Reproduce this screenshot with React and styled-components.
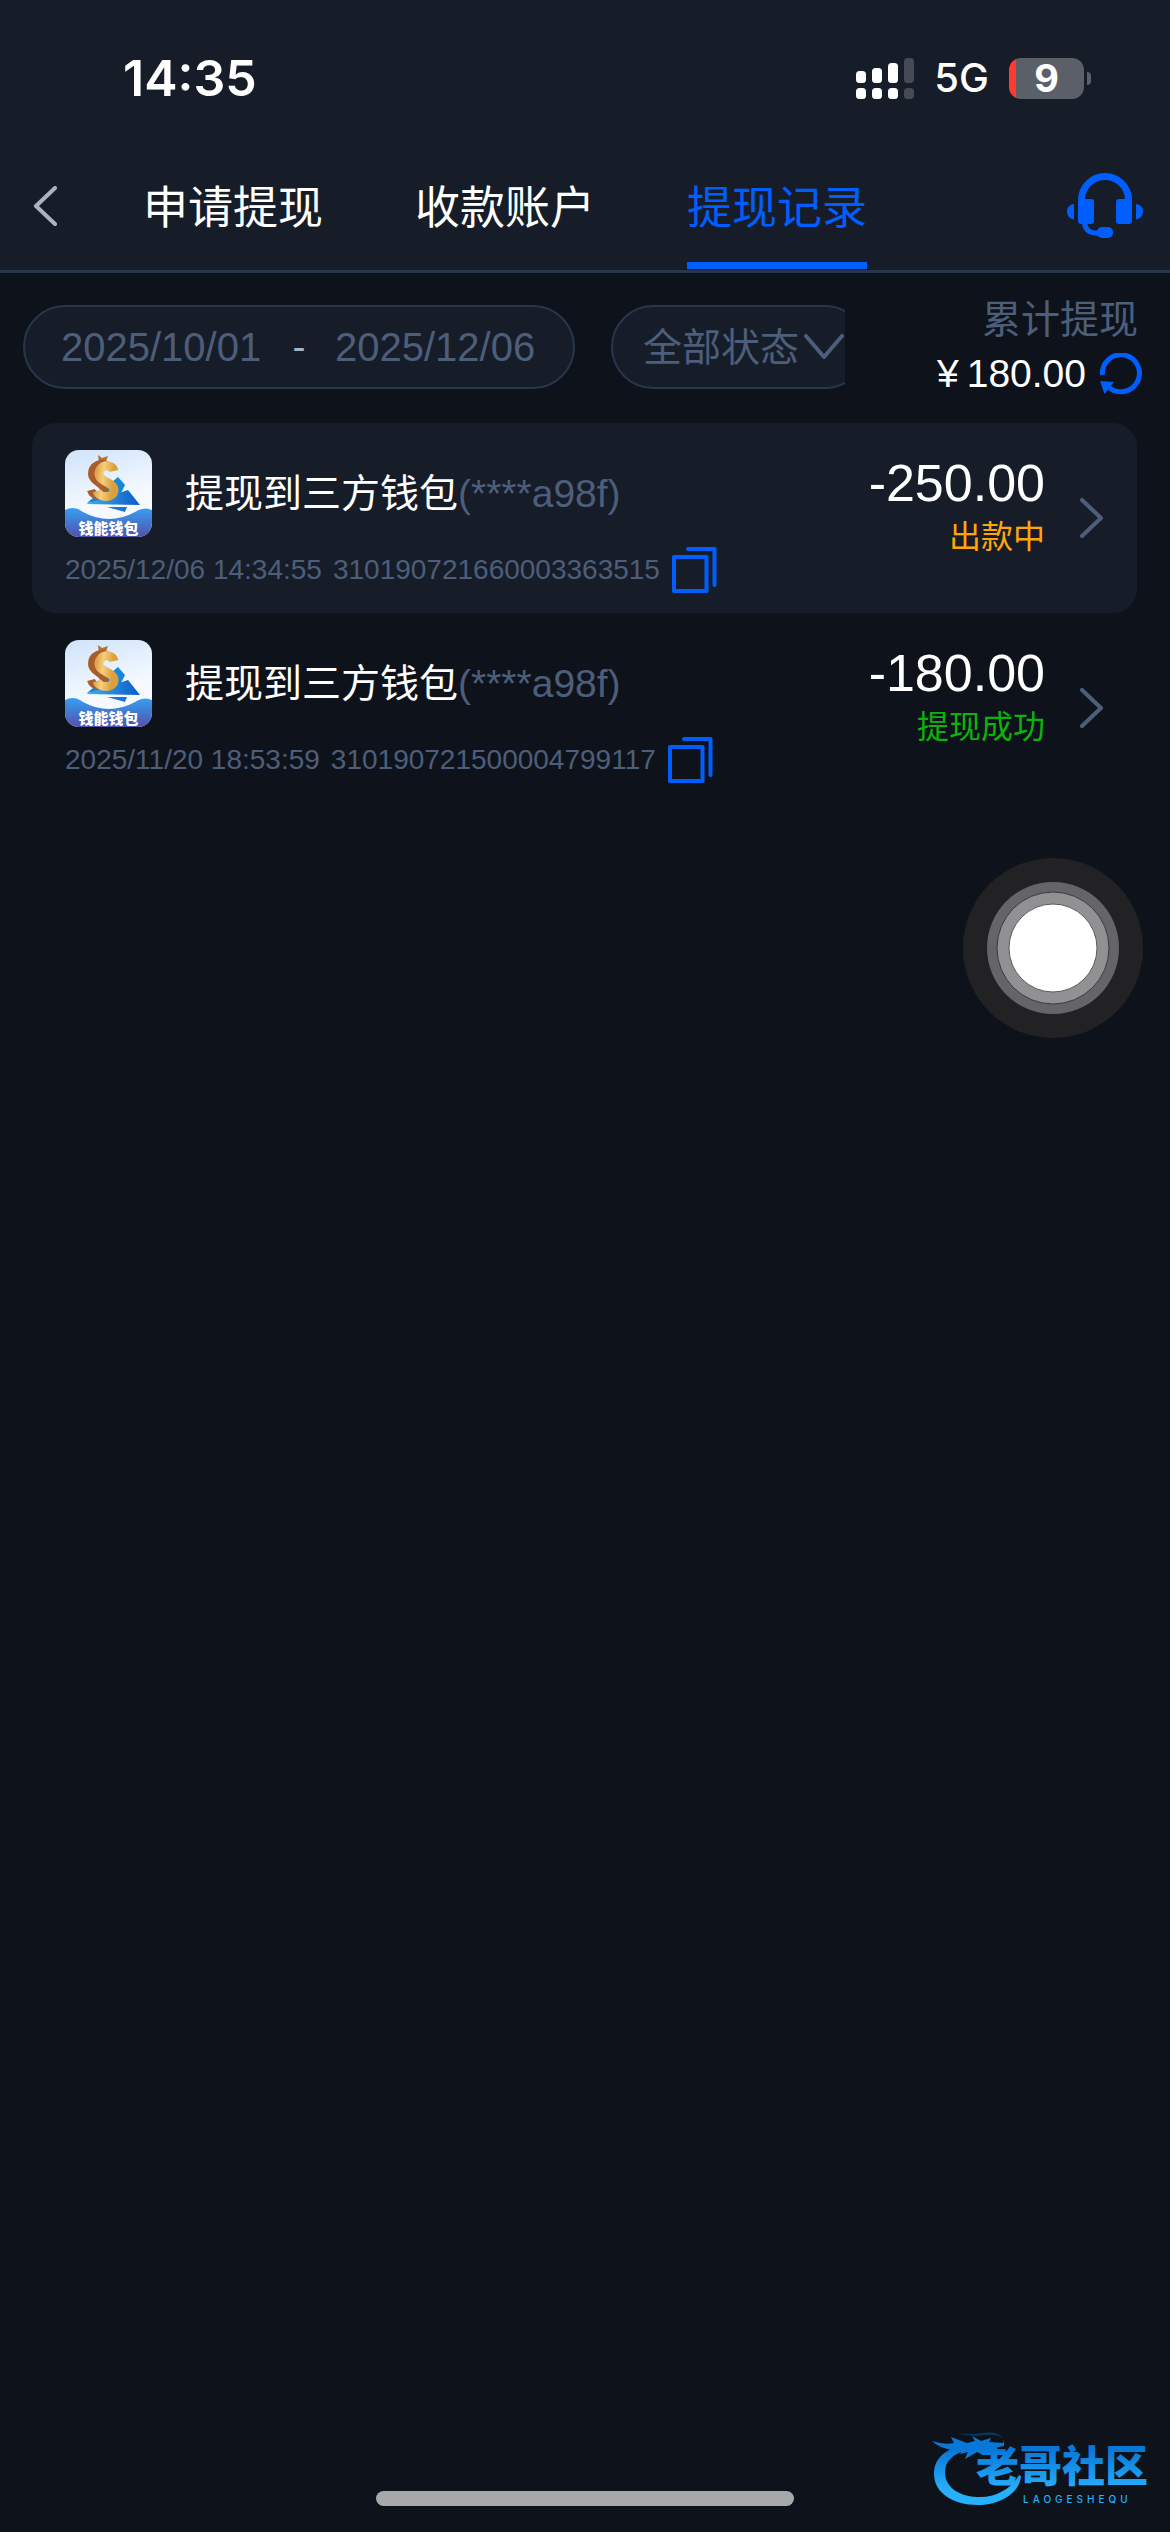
import React from "react";
import styled, { createGlobalStyle } from "styled-components";

const color = {
  page: "#0e131b",
  panel: "#161d28",
  line: "#28364b",
  muted: "#4d5e7b",
  soft: "#a9b3c2",
  accent: "#005eff",
  pending: "#ffa50a",
  success: "#0bb30b",
};

const sans = `"Liberation Sans", "Noto Sans CJK SC", sans-serif`;
const system = `Inter, "Liberation Sans", sans-serif`;

const GlobalStyle = createGlobalStyle`
  *, *::before, *::after { box-sizing: border-box; }
  html { background: ${color.page}; }
  body { margin: 0; background: ${color.page}; color: #fff; font-family: ${sans}; }
  svg { display: block; flex: none; }
  button, input, select { font: inherit; color: inherit; border: 0; background: none; padding: 0; margin: 0; }
`;

const Page = styled.div`
  min-height: 100vh;
  display: flex;
  flex-direction: column;
`;

const Top = styled.header`
  background: ${color.panel};
  border-bottom: 3px solid ${color.line};
`;

const StatusBar = styled.div`
  height: 150px;
  padding: 6px 79px 0 123px;
  display: flex;
  align-items: center;
  font-family: ${system};
`;

const Clock = styled.time`
  flex: 1;
  font-size: 50px;
  line-height: 60px;
  font-weight: 600;
`;

const Network = styled.span`
  margin: 0 20px;
  font-size: 40px;
  line-height: 48px;
  font-weight: 500;
`;

const Battery = styled.span`
  width: 75px;
  height: 41px;
  border-radius: 12px;
  display: grid;
  place-items: center;
  background: linear-gradient(90deg, #ff3b30 7px, #5b6068 7px);
  font-size: 38px;
  line-height: 41px;
  font-weight: 700;
`;

const BatteryTip = styled.span`
  width: 4px;
  height: 13px;
  margin-left: 3px;
  border-radius: 0 4px 4px 0;
  background: #5b6068;
`;

const NavBar = styled.div`
  height: 120px;
  padding: 0 27px 0 33px;
  display: flex;
  align-items: center;
`;

const IconButton = styled.button`
  display: inline-flex;
  cursor: pointer;
`;

const NavButton = styled(IconButton)`
  padding-bottom: 8px;
`;

const Tabs = styled.nav`
  flex: 1;
  align-self: stretch;
  display: flex;
  gap: 92px;
  padding-left: 86px;
`;

const Tab = styled.a`
  display: flex;
  align-items: center;
  margin-bottom: 1px;
  padding-top: 5px;
  border-bottom: 7px solid ${(p) => (p.$active ? color.accent : "transparent")};
  color: ${(p) => (p.$active ? color.accent : "#fff")};
  font-size: 45px;
  line-height: 60px;
  text-decoration: none;
  white-space: nowrap;
`;

const Filters = styled.form`
  display: flex;
  align-items: center;
  padding: 20px 28px 22px 23px;
`;

const DateRange = styled.div`
  width: 552px;
  height: 84px;
  padding: 0 36px;
  display: flex;
  align-items: center;
  justify-content: space-between;
  border: 2px solid ${color.line};
  border-radius: 42px;
  background: ${color.panel};
  color: ${color.soft};
  font-size: 39px;
`;

const DateInput = styled.input`
  width: 202px;
  height: 60px;
  color: ${color.muted};
  font-size: 40px;
`;

const SelectClip = styled.div`
  width: 234px;
  margin-left: 36px;
  overflow: hidden;
`;

const SelectPill = styled.div`
  width: 256px;
  height: 84px;
  padding-left: 30px;
  display: flex;
  align-items: center;
  border: 2px solid ${color.line};
  border-radius: 42px;
  background: ${color.panel};
  color: ${color.muted};
`;

const Select = styled.select`
  appearance: none;
  width: 161px;
  height: 60px;
  font-size: 39px;
`;

const Total = styled.div`
  flex: 1;
  display: flex;
  flex-direction: column;
  align-items: flex-end;
  font-size: 39px;
  line-height: 54px;
  color: ${color.muted};
`;

const TotalLabel = styled.span`
  padding-right: 4px;
`;

const TotalValue = styled.span`
  display: flex;
  align-items: center;
  gap: 14px;
  color: #fff;
`;

const Money = styled.span`
  display: flex;
  gap: 8px;
`;

const Records = styled.ul`
  list-style: none;
  margin: 0;
  padding: 0 33px 0 32px;
`;

const Record = styled.li`
  height: 190px;
  padding: 27px 33px 0;
  display: flex;
  border-radius: 24px;
  background: ${(p) => (p.$raised ? color.panel : "transparent")};
`;

const Info = styled.div`
  flex: 1;
`;

const TitleRow = styled.div`
  display: flex;
  align-items: center;
  gap: 33px;
  height: 87px;
`;

const Title = styled.h2`
  margin: 0;
  font-size: 39px;
  line-height: 54px;
  font-weight: 400;
`;

const Account = styled.span`
  color: ${color.muted};
`;

const Meta = styled.div`
  display: flex;
  align-items: center;
  gap: 11px;
  margin-top: 8px;
  height: 50px;
  color: ${color.muted};
  font-size: 28px;
  line-height: 34px;
`;

const Result = styled.div`
  display: flex;
  flex-direction: column;
  align-items: flex-end;
  padding-top: 3px;
`;

const Amount = styled.strong`
  font-size: 52px;
  line-height: 60px;
  font-weight: 400;
`;

const State = styled.span`
  color: ${(p) => (p.$done ? color.success : color.pending)};
  font-size: 32px;
  line-height: 48px;
`;

const Open = styled(IconButton)`
  height: 136px;
  padding-left: 35px;
  align-items: center;
`;

const AssistiveTouch = styled.button`
  position: fixed;
  right: 27px;
  top: 858px;
  width: 180px;
  height: 180px;
`;

const Footer = styled.footer`
  margin-top: auto;
  padding: 0 12px 26px;
  display: grid;
  grid-template-columns: 1fr 418px 1fr;
  align-items: end;
`;

const HomeIndicator = styled.div`
  grid-column: 2;
  height: 15px;
  border-radius: 8px;
  background: #a7a8ab;
`;

const Brand = styled.div`
  grid-column: 3;
  justify-self: end;
`;

function Signal() {
  const tops = [70, 67, 62, 57];
  return (
    <svg width="58" height="41" viewBox="0 57 58 41" aria-label="信号">
      {tops.map((top, i) => (
        <g key={top} fill={i === 3 ? "#454b55" : "#fff"}>
          <rect x={i * 16} y={top} width="10" height={82 - top} rx="3.5" />
          <rect x={i * 16} y="87" width="10" height="11" rx="3.5" />
        </g>
      ))}
    </svg>
  );
}

function Chevron({ left, stroke }) {
  return (
    <svg width="24" height="40" viewBox="0 0 24 40" fill="none" stroke={stroke} strokeWidth="4" strokeLinecap="round" strokeLinejoin="round">
      <path d={left ? "M22 2 3 20l19 18" : "M2 2l19 18L2 38"} />
    </svg>
  );
}

function Headset() {
  return (
    <svg width="76" height="66" viewBox="0 0 76 66" fill={color.accent}>
      <path d="M14.500 32V27a23.500 23.500 0 0 1 47 0v5" fill="none" stroke={color.accent} strokeWidth="7" />
      <path d="M17.500 48v2q1 9.500 11 10h5" fill="none" stroke={color.accent} strokeWidth="5" />
      <rect x="11" y="26" width="16" height="25" rx="3" />
      <rect x="49" y="26" width="16" height="25" rx="3" />
      <rect x="30" y="54" width="16" height="11" rx="5" />
      <path d="M7 31v15.500Q0 45 0 38.500T7 31zM69 31v15.500q7-1.500 7-8T69 31z" />
    </svg>
  );
}

function Refresh() {
  return (
    <svg width="42" height="42" viewBox="0 0 42 42">
      <path d="M2.500 22A18.500 18.500 0 1 1 8 33.500" fill="none" stroke={color.accent} strokeWidth="5" />
      <path d="M0 28l14 1L4.500 41z" fill={color.accent} />
    </svg>
  );
}

function Copy() {
  return (
    <svg width="46" height="48" viewBox="0 0 46 48" fill="none" stroke={color.accent} strokeWidth="4" strokeLinecap="round" strokeLinejoin="round">
      <path d="M3 11h32.500v34H3zM17 3h26.500v36" />
    </svg>
  );
}

function WalletLogo({ id }) {
  return (
    <svg width="87" height="87" viewBox="0 0 87 87">
      <defs>
        <clipPath id={`${id}-clip`}><rect width="87" height="87" rx="14" /></clipPath>
        <linearGradient id={`${id}-sky`} x1="0" y1="0" x2="0.3" y2="1">
          <stop offset="0" stopColor="#cfe3fb" /><stop offset="0.7" stopColor="#f6faff" />
        </linearGradient>
        <linearGradient id={`${id}-sea`} x1="0" y1="0" x2="0" y2="1">
          <stop offset="0" stopColor="#36a0f2" /><stop offset="1" stopColor="#5350ae" />
        </linearGradient>
        <linearGradient id={`${id}-gold`} x1="0" y1="0" x2="1" y2="0.2">
          <stop offset="0" stopColor="#e0a24c" /><stop offset="0.4" stopColor="#f6cf7c" /><stop offset="1" stopColor="#dba03c" />
        </linearGradient>
        <linearGradient id={`${id}-sail`} x1="0" y1="0" x2="1" y2="0">
          <stop offset="0" stopColor="#3fb0ee" /><stop offset="1" stopColor="#0b5bc8" />
        </linearGradient>
      </defs>
      <g clipPath={`url(#${id}-clip)`}>
        <rect width="87" height="87" fill={`url(#${id}-sky)`} />
        <path d="M53 27l7 8-6 12-12 3-20 3z" fill="#1685dc" />
        <path d="M21 54l42-14 12 15z" fill={`url(#${id}-sail)`} />
        <path d="M42 57h20l-2 5z" fill="#1b75d8" />
        <path d="M33 5l4 3 6-2-3 8h-6z" fill="#b8722f" />
        <path d="M42 15c-6-3-15 0-15 9 0 8 12 9 12 16 0 6-11 8-13 0" fill="none" stroke="#a85e2a" strokeWidth="8" />
        <path d="M49 21c-2-8-15-7-15 3 0 8 15 8 15 16 0 8-14 9-17 1" fill="none" stroke={`url(#${id}-gold)`} strokeWidth="9" />
        <path d="M0 60q9-5 18 2 26 14 52 0 9-6 17-2v27H0z" fill={`url(#${id}-sea)`} />
        <text x="43.500" y="84" textAnchor="middle" fill="#fff" fontFamily={`"Noto Sans CJK SC", sans-serif`} fontSize="15" fontWeight="900">钱能钱包</text>
      </g>
    </svg>
  );
}

function BrandLogo() {
  return (
    <svg width="226" height="80" viewBox="0 0 226 80">
      <defs>
        <linearGradient id="brand" x1="0" y1="0" x2="0" y2="80" gradientUnits="userSpaceOnUse">
          <stop offset="0.3" stopColor="#0878d8" /><stop offset="0.8" stopColor="#27b0fb" />
        </linearGradient>
      </defs>
      <g fill="url(#brand)">
        <path d="M32 20C10 23 2 35 2 48c0 18 18 31 44 31 22 0 42-12 43-29l-2-1c-8 14-24 23-42 22-20-1-32-11-32-25 0-11 8-18 22-22z" />
        <path d="M0 15q12 4 22 2l-3-6 16 6 8-2-3-5 9 5 10-3-2 4 14 1 1-3v6l-10 2 6 5-12-2-5 4-6-3-12 7 3-7-8 2 3-5-12 1Q6 21 0 15z" />
        <path d="M25 7q14 2 26 0 14-2 20 5-8-4-18-3-16 2-28-2z" opacity="0.35" />
        <text x="44" y="56" fontFamily={`"Noto Sans CJK SC", sans-serif`} fontSize="43" fontWeight="900">老哥社区</text>
        <text x="91" y="77" fontFamily={system} fontSize="10" letterSpacing="4" fontWeight="500">LAOGESHEQU</text>
      </g>
    </svg>
  );
}

const tabs = ["申请提现", "收款账户", "提现记录"];

const records = [
  { date: "2025/12/06 14:34:55", order: "310190721660003363515", amount: "-250.00", state: "出款中", done: false },
  { date: "2025/11/20 18:53:59", order: "310190721500004799117", amount: "-180.00", state: "提现成功", done: true },
];

export default function App() {
  return (
    <Page>
      <GlobalStyle />
      <Top>
        <StatusBar>
          <Clock>14:35</Clock>
          <Signal />
          <Network>5G</Network>
          <Battery>9</Battery>
          <BatteryTip />
        </StatusBar>
        <NavBar>
          <NavButton type="button" aria-label="返回"><Chevron left stroke={color.soft} /></NavButton>
          <Tabs>
            {tabs.map((label, i) => (
              <Tab key={label} href="#" $active={i === 2} aria-current={i === 2 ? "page" : undefined}>{label}</Tab>
            ))}
          </Tabs>
          <NavButton type="button" aria-label="客服"><Headset /></NavButton>
        </NavBar>
      </Top>

      <main>
        <Filters>
          <DateRange>
            <DateInput aria-label="开始日期" defaultValue="2025/10/01" />
            <span>-</span>
            <DateInput aria-label="结束日期" defaultValue="2025/12/06" />
          </DateRange>
          <SelectClip>
            <SelectPill>
              <Select aria-label="状态" defaultValue="全部状态">
                <option>全部状态</option>
              </Select>
              <svg width="40" height="26" viewBox="0 0 40 26" fill="none" stroke={color.muted} strokeWidth="4" strokeLinecap="round" strokeLinejoin="round">
                <path d="M2 2l18 21L38 2" />
              </svg>
            </SelectPill>
          </SelectClip>
          <Total>
            <TotalLabel>累计提现</TotalLabel>
            <TotalValue>
              <Money><span>¥</span><span>180.00</span></Money>
              <IconButton type="button" aria-label="刷新"><Refresh /></IconButton>
            </TotalValue>
          </Total>
        </Filters>

        <Records>
          {records.map((r, i) => (
            <Record key={r.order} $raised={i % 2 === 0}>
              <Info>
                <TitleRow>
                  <WalletLogo id={`wallet${i}`} />
                  <Title>提现到三方钱包<Account>(****a98f)</Account></Title>
                </TitleRow>
                <Meta>
                  <time>{r.date}</time>
                  <span>{r.order}</span>
                  <IconButton type="button" aria-label="复制单号"><Copy /></IconButton>
                </Meta>
              </Info>
              <Result>
                <Amount>{r.amount}</Amount>
                <State $done={r.done}>{r.state}</State>
              </Result>
              <Open type="button" aria-label="查看详情"><Chevron stroke={color.muted} /></Open>
            </Record>
          ))}
        </Records>
      </main>

      <AssistiveTouch type="button" aria-label="辅助触控">
        <svg width="180" height="180" viewBox="0 0 180 180">
          <circle cx="90" cy="90" r="90" fill="#222224" />
          <circle cx="90" cy="90" r="66" fill="#656567" />
          <circle cx="90" cy="90" r="56" fill="#909192" stroke="#3a3a3c" strokeWidth="1" />
          <circle cx="90" cy="90" r="44" fill="#fff" stroke="#5a5a5c" strokeWidth="1" />
        </svg>
      </AssistiveTouch>

      <Footer>
        <HomeIndicator />
        <Brand><BrandLogo /></Brand>
      </Footer>
    </Page>
  );
}
